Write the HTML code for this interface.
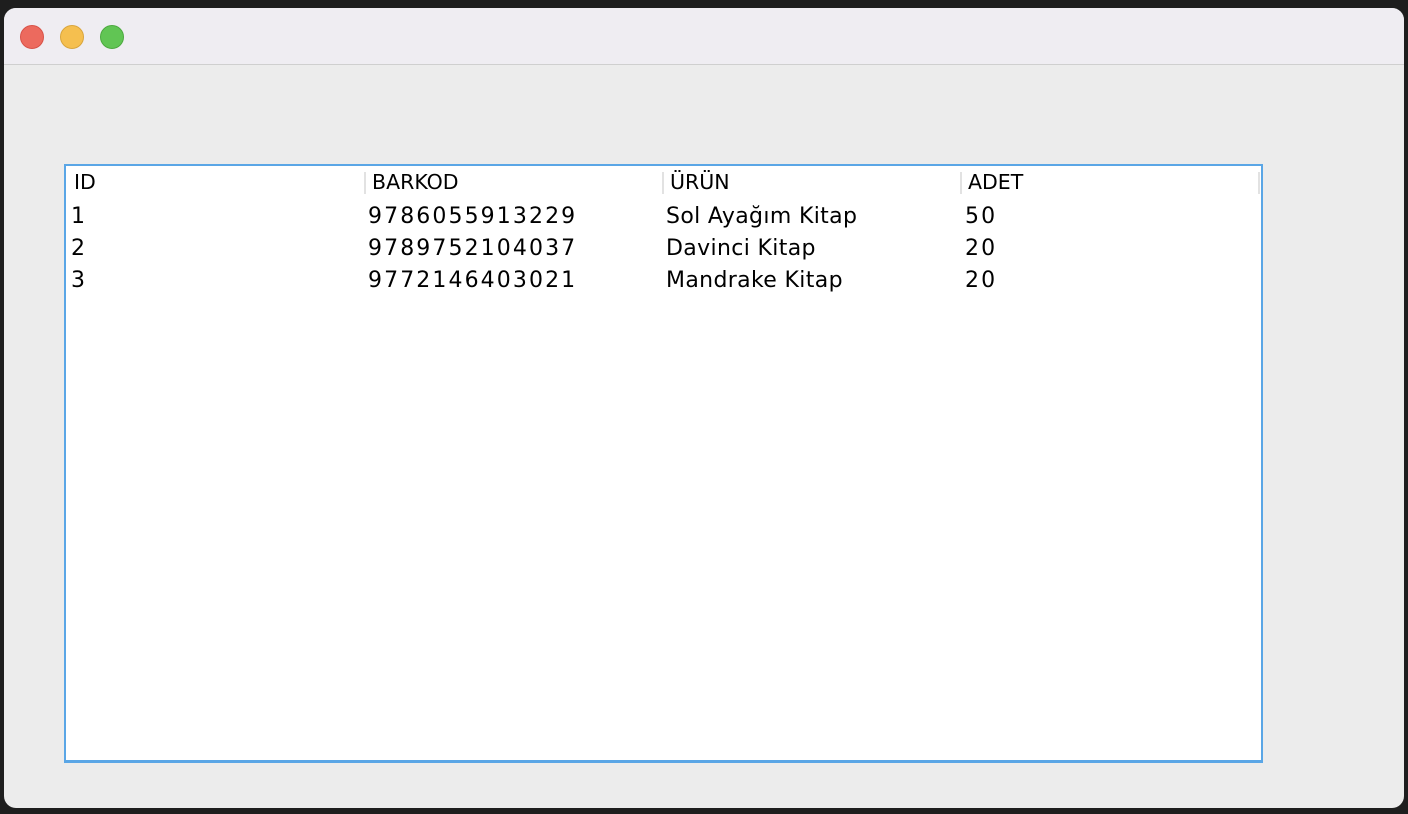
<!DOCTYPE html>
<html><head><meta charset="utf-8"><style>
html,body{margin:0;padding:0;width:1408px;height:814px;overflow:hidden;background:#1e1e1e;font-family:"DejaVu Sans","Liberation Sans",sans-serif;}
.win{position:absolute;left:4px;top:8px;width:1400px;height:800px;background:#ececec;border-radius:12px;overflow:hidden;}
.title{position:absolute;left:0;top:0;width:100%;height:56px;background:#efedf2;border-bottom:1px solid #cfcfcf;}
.dot{position:absolute;top:17px;width:24px;height:24px;border-radius:50%;}
.tbl{position:absolute;left:60px;top:156px;width:1195px;height:594px;background:#fff;border:2px solid #5aa6e6;border-bottom-width:3px;}
.t{position:absolute;color:#000;white-space:nowrap;}
.h{font-size:20.5px;top:4px;}
.r{font-size:22px;letter-spacing:2.1px;}
.w{letter-spacing:0.35px;}
.sep{position:absolute;top:6px;width:2px;height:22px;background:#e2e2e2;}
</style></head><body>
<div class="win">
<div class="title">
<div class="dot" style="left:16px;background:#ec6a5e;border:1px solid #d85248;width:22px;height:22px"></div>
<div class="dot" style="left:56px;background:#f5bf4f;border:1px solid #d9a53c;width:22px;height:22px"></div>
<div class="dot" style="left:96px;background:#61c554;border:1px solid #4ca93f;width:22px;height:22px"></div>
</div>
<div class="tbl">
<div class="sep" style="left:298px"></div><div class="sep" style="left:596px"></div><div class="sep" style="left:894px"></div><div class="sep" style="left:1192px"></div>
<div class="t h" style="left:8px">ID</div>
<div class="t h" style="left:306px">BARKOD</div>
<div class="t h" style="left:604px">ÜRÜN</div>
<div class="t h" style="left:902px">ADET</div>
<div class="t r" style="left:5px;top:38px">1</div><div class="t r" style="left:302px;top:38px">9786055913229</div><div class="t r w" style="left:600px;top:38px">Sol Ayağım Kitap</div><div class="t r" style="left:899px;top:38px">50</div>
<div class="t r" style="left:5px;top:70px">2</div><div class="t r" style="left:302px;top:70px">9789752104037</div><div class="t r w" style="left:600px;top:70px">Davinci Kitap</div><div class="t r" style="left:899px;top:70px">20</div>
<div class="t r" style="left:5px;top:102px">3</div><div class="t r" style="left:302px;top:102px">9772146403021</div><div class="t r w" style="left:600px;top:102px">Mandrake Kitap</div><div class="t r" style="left:899px;top:102px">20</div>
</div>
</div>
</body></html>
